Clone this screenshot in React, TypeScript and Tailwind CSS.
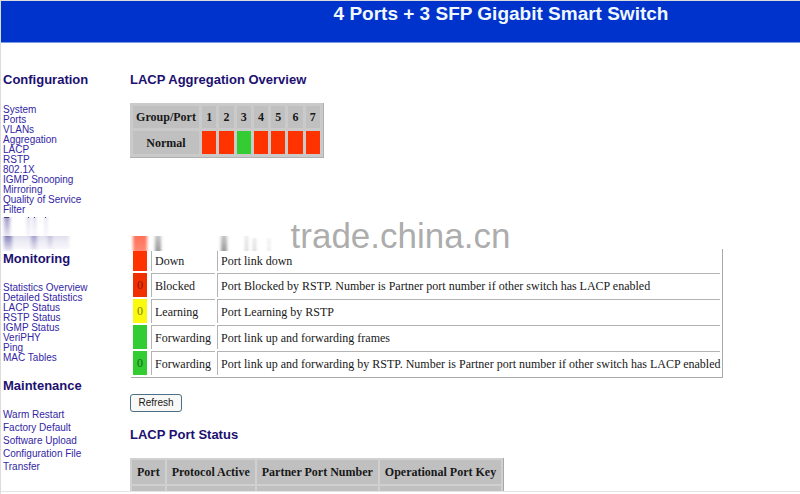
import React from 'react';

interface NavSectionProps {
  title: string;
  items: string[];
  listClass: string;
}

const configLinks = [
  'System',
  'Ports',
  'VLANs',
  'Aggregation',
  'LACP',
  'RSTP',
  '802.1X',
  'IGMP Snooping',
  'Mirroring',
  'Quality of Service',
  'Filter',
];

const monitorLinks = [
  'Statistics Overview',
  'Detailed Statistics',
  'LACP Status',
  'RSTP Status',
  'IGMP Status',
  'VeriPHY',
  'Ping',
  'MAC Tables',
];

const maintenanceLinks = [
  'Warm Restart',
  'Factory Default',
  'Software Upload',
  'Configuration File',
  'Transfer',
];

const ports = [
  { id: 1, up: false },
  { id: 2, up: false },
  { id: 3, up: true },
  { id: 4, up: false },
  { id: 5, up: false },
  { id: 6, up: false },
  { id: 7, up: false },
];

const legend = [
  { mark: '0', color: 'bg-[#f03000] text-[#8a1500]', state: 'Blocked', text: 'Port Blocked by RSTP. Number is Partner port number if other switch has LACP enabled' },
  { mark: '0', color: 'bg-[#fafa10] text-[#80800a]', state: 'Learning', text: 'Port Learning by RSTP' },
  { mark: '', color: 'bg-[#33cc33]', state: 'Forwarding', text: 'Port link up and forwarding frames' },
  { mark: '0', color: 'bg-[#33cc33] text-[#166616]', state: 'Forwarding', text: 'Port link up and forwarding by RSTP. Number is Partner port number if other switch has LACP enabled' },
];

const NavSection: React.FC<NavSectionProps> = ({ title, items, listClass }) => (
  <section>
    <h2 className="text-[13px] leading-4 font-bold text-[#1c1070]">{title}</h2>
    <ul className={`text-[10px] text-[#3326a4] ${listClass}`}>
      {items.map((item) => (
        <li key={item}>
          <a href="#" className="block whitespace-nowrap">{item}</a>
        </li>
      ))}
    </ul>
  </section>
);

// Faded streaks where the last menu entries wash out
const NavFade = () => (
  <svg width="90" height="36" viewBox="0 0 90 36" className="-ml-[3px] block" aria-hidden="true">
    <defs>
      <filter id="navSoft" x="-50%" y="-20%" width="200%" height="140%">
        <feGaussianBlur stdDeviation="1.8 0.6" />
      </filter>
      <linearGradient id="navDown" x1="0" y1="0" x2="0" y2="1">
        <stop offset="0" stopColor="#3a2f90" stopOpacity="0.5" />
        <stop offset="1" stopColor="#3a2f90" stopOpacity="0.1" />
      </linearGradient>
    </defs>
    <g fill="#4a4280">
      <rect x="4" y="2" width="5" height="1" />
      <rect x="28" y="2" width="1" height="1" />
      <rect x="34" y="2" width="1" height="1" />
      <rect x="45" y="2" width="1" height="1" />
    </g>
    <g fill="url(#navDown)" filter="url(#navSoft)">
      <rect x="4" y="2" width="6" height="20" />
      <rect x="27" y="2" width="3" height="20" opacity="0.4" />
      <rect x="33" y="2" width="3" height="20" opacity="0.4" />
      <rect x="45" y="2" width="2" height="20" opacity="0.4" />
      <rect x="3" y="21" width="66" height="13" opacity="0.3" />
      <rect x="4" y="21" width="8" height="15" />
      <rect x="31" y="21" width="6" height="14" opacity="0.7" />
      <rect x="48" y="21" width="4" height="13" opacity="0.4" />
    </g>
  </svg>
);

const LegendFade = () => (
  <svg width="180" height="16" viewBox="0 0 180 16" className="block" aria-hidden="true">
    <defs>
      <filter id="legendSoft" x="-60%" y="-10%" width="220%" height="120%">
        <feGaussianBlur stdDeviation="1.5 0.3" />
      </filter>
      <linearGradient id="legendRed" x1="0" y1="0" x2="0" y2="1">
        <stop offset="0" stopColor="#ff7058" />
        <stop offset="1" stopColor="#ff8a72" />
      </linearGradient>
      <linearGradient id="legendGray" x1="0" y1="0" x2="0" y2="1">
        <stop offset="0" stopColor="#555" stopOpacity="0.35" />
        <stop offset="1" stopColor="#555" stopOpacity="0.6" />
      </linearGradient>
    </defs>
    <g filter="url(#legendSoft)">
      <rect x="3" y="1" width="14" height="15" fill="url(#legendRed)" />
      <rect x="25" y="1" width="6" height="15" fill="url(#legendGray)" />
      <rect x="91" y="1" width="6" height="15" fill="url(#legendGray)" />
      <rect x="115" y="1" width="3" height="15" fill="url(#legendGray)" opacity="0.4" />
      <rect x="123" y="3" width="3" height="13" fill="url(#legendGray)" opacity="0.4" />
      <rect x="138" y="3" width="2" height="13" fill="url(#legendGray)" opacity="0.3" />
    </g>
  </svg>
);

const AggregationTable = () => (
  <table className="w-[194px] table-fixed border-separate border-spacing-[3px] border-r border-b border-[#b0b0b0] bg-[#cacaca] font-['Liberation_Serif',serif] text-[12px] leading-4 font-bold">
    <colgroup>
      <col className="w-[66px]" />
    </colgroup>
    <thead>
      <tr className="h-[22px]">
        <th scope="col" className="bg-[#c0c0c0] p-0">Group/Port</th>
        {ports.map((port) => (
          <th key={port.id} scope="col" className="bg-[#c0c0c0] p-0">{port.id}</th>
        ))}
      </tr>
    </thead>
    <tbody>
      <tr className="h-[23px]">
        <th scope="row" className="bg-[#c0c0c0] p-0">Normal</th>
        {ports.map((port) => (
          <td key={port.id} className={port.up ? 'bg-[#33cc33] p-0' : 'bg-[#ff3300] p-0'} />
        ))}
      </tr>
    </tbody>
  </table>
);

const LegendTable = () => (
  <table className="-mt-[2px] ml-px border-separate border-spacing-[2px] border-r border-b border-[#aaa] font-['Liberation_Serif',serif] text-[12px] leading-4 whitespace-nowrap">
    <tbody>
      <tr className="h-[20px]">
        <td className="w-[16px] border-r-2 border-white bg-[#ff3300] p-0" />
        <td className="w-[64px] border-l border-[#b4b4b4] py-0 pr-1 pl-[3px]">Down</td>
        <td className="border-l border-[#b4b4b4] py-0 pr-0 pl-[3px]">Port link down</td>
      </tr>
      {legend.map((row) => (
        <tr key={row.text} className="h-[24px]">
          <td className={`border-r-2 border-white p-0 text-center ${row.color}`}>{row.mark}</td>
          <td className="border-t border-l border-[#b4b4b4] py-0 pr-1 pl-[3px]">{row.state}</td>
          <td className="border-t border-l border-[#b4b4b4] py-0 pr-0 pl-[3px]">{row.text}</td>
        </tr>
      ))}
    </tbody>
  </table>
);

const StatusTable = () => (
  <table className="border-separate border-spacing-[2px] border-r border-[#a8a8a8] bg-[#d0d0d0] font-['Liberation_Serif',serif] text-[12px] leading-4 font-bold whitespace-nowrap">
    <thead>
      <tr className="h-[24px] bg-[#c0c0c0]">
        <th scope="col" className="px-[5px]">Port</th>
        <th scope="col" className="px-[5px]">Protocol Active</th>
        <th scope="col" className="px-[5px]">Partner Port Number</th>
        <th scope="col" className="px-[5px]">Operational Port Key</th>
      </tr>
    </thead>
    <tbody>
      <tr className="h-[24px] bg-[#c0c0c0]">
        <td />
        <td />
        <td />
        <td />
      </tr>
    </tbody>
  </table>
);

export default function App() {
  return (
    <div className="relative flex h-screen flex-col overflow-hidden border-t border-l border-[#dcdcdc] bg-white pb-[2px] font-['Liberation_Sans',Arial,sans-serif] text-[#181818]">
      <header className="shrink-0 border-b border-[#7d96e0] bg-[#0033cc] pb-4 pl-[201px] text-center text-[#f0f8ff]">
        <h1 className="text-[19px] leading-[25px] font-bold">4 Ports + 3 SFP Gigabit Smart Switch</h1>
      </header>

      <div className="flex min-h-0 flex-1 overflow-hidden border-b border-[#e4e4e4]">
        <nav className="w-[129px] shrink-0 pt-[29px] pl-[2px]">
          <NavSection title="Configuration" items={configLinks} listClass="mt-[17px] leading-[10px]" />
          <NavFade />
          <NavSection title="Monitoring" items={monitorLinks} listClass="mt-4 leading-[10px]" />
          <div className="h-[15px]" />
          <NavSection title="Maintenance" items={maintenanceLinks} listClass="mt-[14px] leading-[13px]" />
        </nav>

        <main className="min-w-0 flex-1 pt-[29px]">
          <h2 className="mb-[15px] text-[13px] leading-4 font-bold text-[#1c1070]">LACP Aggregation Overview</h2>
          <AggregationTable />

          <div className="mt-[77px]">
            <LegendFade />
            <LegendTable />
          </div>

          <button type="button" className="mt-4 block h-[18px] w-[52px] rounded-[3px] border border-[#4d6f86] bg-[#f8f8f6] text-[10px] leading-4">
            Refresh
          </button>

          <h2 className="my-[15px] text-[13px] leading-4 font-bold text-[#1c1070]">LACP Port Status</h2>
          <StatusTable />
        </main>
      </div>

      <div className="pointer-events-none absolute inset-x-0 top-[215px] text-center text-[35px] leading-10 text-[#7c7c7c]/65">
        trade.china.cn
      </div>
    </div>
  );
}
